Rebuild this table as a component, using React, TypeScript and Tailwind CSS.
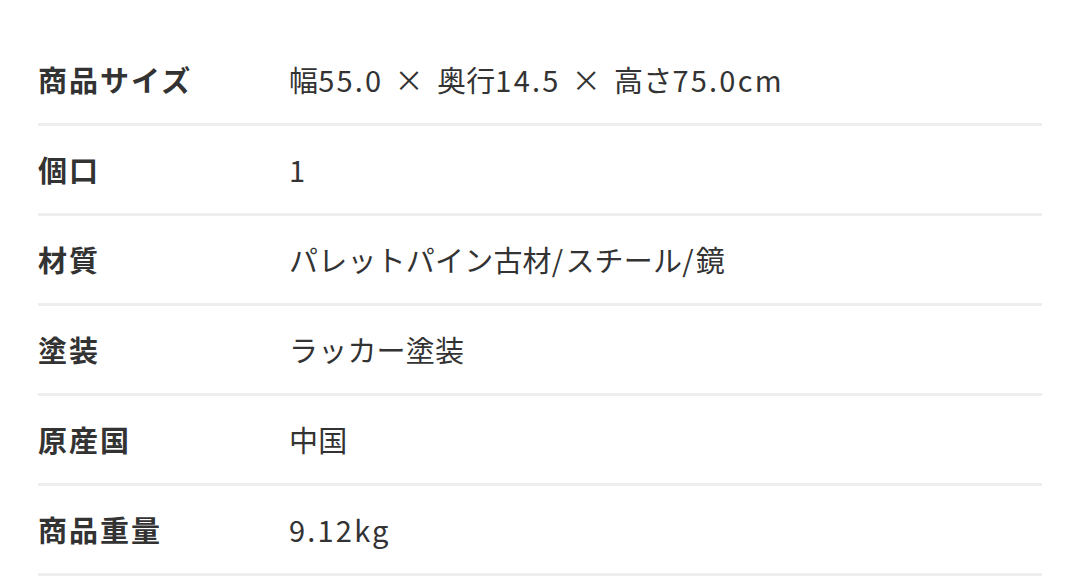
const rows: [string, string][] = [
  ["商品サイズ", "幅55.0 × 奥行14.5 × 高さ75.0cm"],
  ["個口", "1"],
  ["材質", "パレットパイン古材/スチール/鏡"],
  ["塗装", "ラッカー塗装"],
  ["原産国", "中国"],
  ["商品重量", "9.12kg"],
];

function Value({ text }: { text: string }) {
  const parts = text.match(/[\u3000-\u9fff\uff00-\uffef]+|[^\u3000-\u9fff\uff00-\uffef]+/g) || [];
  return (
    <>
      {parts.map((p, i) =>
        /[\u3000-\u9fff]/.test(p) ? (
          <span key={i} className="tracking-[0.2px]">{p}</span>
        ) : (
          <span key={i} className="tracking-[2.2px] [word-spacing:2.5px]">{p}</span>
        )
      )}
    </>
  );
}

export default function App() {
  return (
    <div
      className="w-[1080px] h-[576px] bg-white overflow-hidden pt-[36px] pl-[38px] pr-[38px]"
      style={{ fontFamily: '"Noto Sans CJK JP", "Noto Sans", sans-serif' }}
    >
      {rows.map(([k, v]) => (
        <div key={k} className="flex items-center h-[90px] border-b-[3px] border-[#eeeeee]">
          <div className="w-[251px] text-[29px] font-bold text-[#333333] tracking-[2px]">{k}</div>
          <div className="text-[29px] text-[#333333]">
            <Value text={v} />
          </div>
        </div>
      ))}
    </div>
  );
}
